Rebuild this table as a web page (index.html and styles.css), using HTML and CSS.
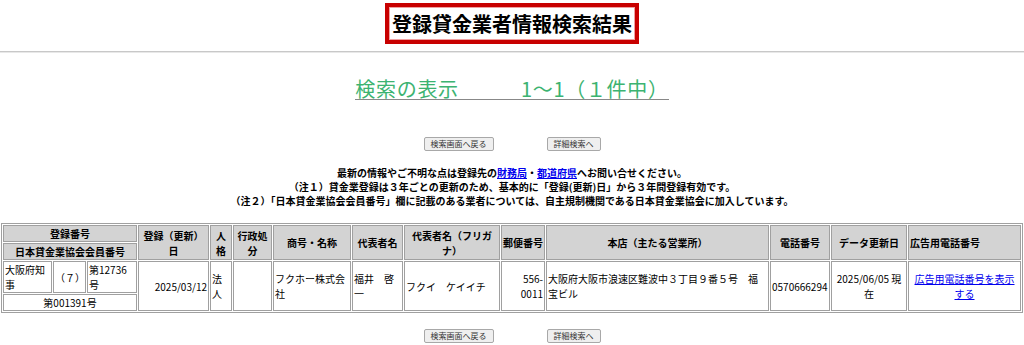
FILE: index.html
```html
<!DOCTYPE html>
<html lang="ja">
<head>
<meta charset="utf-8">
<title>登録貸金業者情報検索結果</title>
<link rel="stylesheet" href="styles.css">
</head>
<body>
<div class="title-wrap"><h1 class="title">登録貸金業者情報検索結果</h1></div>
<hr class="rule">
<div class="count-wrap"><span class="count">検索の表示　　　1～1（１件中）</span></div>
<div class="buttons"><button class="btn" type="button">検索画面へ戻る</button><button class="btn" type="button">詳細検索へ</button></div>
<div class="notes">
<p>最新の情報やご不明な点は登録先の<a href="#">財務局</a>・<a href="#">都道府県</a>へお問い合せください。</p>
<p>（注１）貸金業登録は３年ごとの更新のため、基本的に「登録(更新)日」から３年間登録有効です。</p>
<p>（注２）「日本貸金業協会会員番号」欄に記載のある業者については、自主規制機関である日本貸金業協会に加入しています。</p>
</div>
<table class="result">
<colgroup>
<col class="w49"><col class="w33"><col class="w50"><col class="w71"><col class="w22"><col class="w39"><col class="w78"><col class="w51"><col class="w96"><col class="w44"><col class="w223"><col class="w60"><col class="w76"><col class="w113">
</colgroup>
<tr>
<th colspan="3">登録番号</th>
<th rowspan="2">登録（更新）日</th>
<th rowspan="2">人格</th>
<th rowspan="2">行政処分</th>
<th rowspan="2">商号・名称</th>
<th rowspan="2">代表者名</th>
<th rowspan="2">代表者名（フリガナ）</th>
<th rowspan="2">郵便番号</th>
<th rowspan="2">本店（主たる営業所）</th>
<th rowspan="2">電話番号</th>
<th rowspan="2">データ更新日</th>
<th rowspan="2" class="l">広告用電話番号</th>
</tr>
<tr>
<th colspan="3">日本貸金業協会会員番号</th>
</tr>
<tr>
<td>大阪府知事</td>
<td class="c">（７）</td>
<td>第12736号</td>
<td rowspan="2" class="r">2025/03/12</td>
<td rowspan="2">法人</td>
<td rowspan="2"></td>
<td rowspan="2">フクホー株式会社</td>
<td rowspan="2">福井　啓一</td>
<td rowspan="2">フクイ　ケイイチ</td>
<td rowspan="2" class="r">556-0011</td>
<td rowspan="2">大阪府大阪市浪速区難波中３丁目９番５号　福宝ビル</td>
<td rowspan="2">0570666294</td>
<td rowspan="2" class="c">2025/06/05 現在</td>
<td rowspan="2" class="c"><a href="#">広告用電話番号を表示する</a></td>
</tr>
<tr>
<td colspan="3" class="c">第001391号</td>
</tr>
</table>
<div class="buttons bottom"><button class="btn" type="button">検索画面へ戻る</button><button class="btn" type="button">詳細検索へ</button></div>
</body>
</html>
```
FILE: styles.css
```css
html, body {
  margin: 0;
  padding: 0;
  background: #fff;
}
body {
  font-family: "Noto Sans CJK JP", "Noto Sans", sans-serif;
  color: #000;
  width: 1024px;
}
.title-wrap {
  text-align: center;
  padding-top: 3px;
}
.title {
  display: inline-block;
  margin: 0;
  font-size: 20px;
  font-weight: bold;
  line-height: 29px;
  padding: 2px 3px;
  border: 4px solid #c80000;
  box-shadow: inset 0 0 0 1px #f0a0a0;
}
.rule {
  margin: 7px 0 0;
  height: 0;
  border: 0;
  border-top: 1px solid #c8c8c8;
  border-bottom: 1px solid #e8e8e8;
}
.count-wrap {
  text-align: center;
  margin-top: 25px;
}
.count {
  display: inline-block;
  font-size: 20px;
  line-height: 20px;
  letter-spacing: 0.7px;
  color: #3cb371;
  border-bottom: 1px solid #888;
}
.buttons {
  display: flex;
  justify-content: center;
  gap: 53px;
  margin-top: 35px;
}
.buttons.bottom {
  margin-top: 16px;
}
.btn {
  font-family: "Noto Sans CJK JP", sans-serif;
  font-size: 8px;
  line-height: 10px;
  padding: 1px 6px;
  border: 1px solid #a8a8a8;
  border-radius: 2px;
  background: #efefef;
  color: #333;
}
.notes {
  margin-top: 15px;
  text-align: center;
  font-size: 10px;
  font-weight: bold;
  line-height: 14px;
}
.notes p {
  margin: 0;
}
a {
  color: #0000ee;
  text-decoration: underline;
}
.result {
  margin: 15px 0 0 1px;
  border-collapse: separate;
  border-spacing: 1px;
  border: 1px solid #a0a0a0;
  table-layout: fixed;
  width: 1022px;
  font-size: 10px;
  line-height: 15px;
}
.result th, .result td {
  border: 1px solid #a0a0a0;
  padding: 0 1px;
  vertical-align: middle;
  text-align: left;
}
.result th {
  background: #d3d3d3;
  font-weight: bold;
  text-align: center;
}
.result th.l { text-align: left; }
.result td.c { text-align: center; }
.result td.r { text-align: right; }
.w49 { width: 49px; }
.w33 { width: 33px; }
.w50 { width: 50px; }
.w71 { width: 71px; }
.w22 { width: 22px; }
.w39 { width: 39px; }
.w78 { width: 78px; }
.w51 { width: 51px; }
.w96 { width: 96px; }
.w44 { width: 44px; }
.w223 { width: 223px; }
.w60 { width: 60px; }
.w76 { width: 76px; }
.w113 { width: 113px; }
```
